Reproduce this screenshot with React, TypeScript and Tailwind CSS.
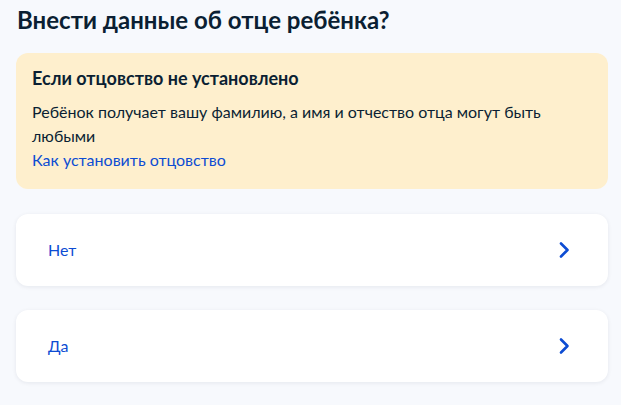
import React from "react";

function Chevron() {
  return (
    <svg width="12" height="18" viewBox="0 0 12 18" fill="none">
      <path d="M3 2.5 L9.5 9 L3 15.5" stroke="#0D4CD3" strokeWidth="2.6" strokeLinecap="round" strokeLinejoin="round" />
    </svg>
  );
}

function Option({ label }: { label: string }) {
  return (
    <div className="flex h-[72px] items-center justify-between rounded-xl bg-white pl-8 pr-[38px] shadow-[0_1px_4px_rgba(11,31,51,0.08)]">
      <span className="text-[16px] text-[#0D4CD3]">{label}</span>
      <Chevron />
    </div>
  );
}

export default function App() {
  return (
    <div className="min-h-[405px] w-[621px] bg-[#F7F9FD] px-4 pt-[6px] text-[#0B1F33]" style={{ fontFamily: "Lato, 'Noto Sans', sans-serif" }}>
      <h1 className="pl-px text-[24px] font-bold leading-[28px]">Внести данные об отце ребёнка?</h1>
      <div className="mt-[19px] w-[592px] rounded-xl bg-[#FEEFCD] px-4 pt-[13px] pb-[17px]">
        <div className="text-[18px] font-bold leading-[24px]">Если отцовство не установлено</div>
        <p className="mt-[10px] text-[16px] leading-[24px] pr-8">
          Ребёнок получает вашу фамилию, а имя и отчество отца могут быть любыми
        </p>
        <div className="text-[16px] leading-[24px] text-[#0D4CD3]">Как установить отцовство</div>
      </div>
      <div className="mt-[25px] flex w-[592px] flex-col gap-6">
        <Option label="Нет" />
        <Option label="Да" />
      </div>
    </div>
  );
}
